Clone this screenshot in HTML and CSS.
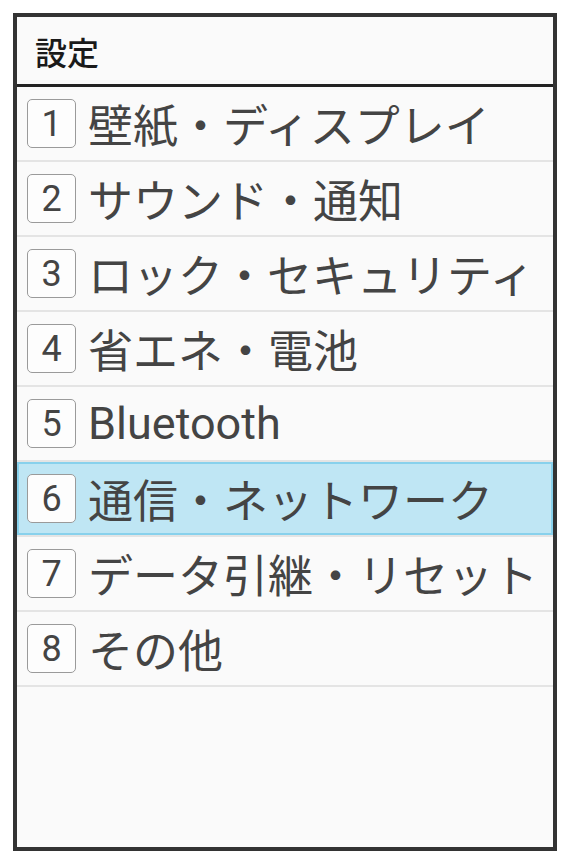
FILE: index.html
```html
<!DOCTYPE html>
<html lang="ja">
<head>
    <meta charset="UTF-8">
    <meta name="viewport" content="width=device-width, initial-scale=1.0">
    <title>設定</title>
    <link rel="stylesheet" href="styles.css">
</head>
<body>
    <div class="screen">
        <div class="title">設定</div>
        <ul class="menu">
            <li class="item"><span class="key">1</span><span class="label">壁紙・ディスプレイ</span></li>
            <li class="item"><span class="key">2</span><span class="label">サウンド・通知</span></li>
            <li class="item"><span class="key">3</span><span class="label">ロック・セキュリティ</span></li>
            <li class="item"><span class="key">4</span><span class="label">省エネ・電池</span></li>
            <li class="item"><span class="key">5</span><span class="label">Bluetooth</span></li>
            <li class="item active"><span class="key">6</span><span class="label">通信・ネットワーク</span></li>
            <li class="item"><span class="key">7</span><span class="label">データ引継・リセット</span></li>
            <li class="item"><span class="key">8</span><span class="label">その他</span></li>
        </ul>
    </div>
</body>
</html>
```

FILE: styles.css
```css
body {
    margin: 0;
    padding: 13px;
    background-color: #fff;
    font-family: Roboto, "Noto Sans CJK JP", sans-serif;
    color: #444;
}
.screen {
    width: 544px;
    height: 838px;
    box-sizing: border-box;
    border: 4px solid #333;
    background: #fafafa;
}
.title {
    height: 67px;
    display: flex;
    align-items: center;
    padding-left: 18px;
    border-bottom: 3px solid #222;
    font-size: 32px;
    font-weight: 500;
    color: #1a1a1a;
}
.menu {
    list-style: none;
    margin: 0;
    padding: 0;
}
.item {
    height: 73px;
    display: flex;
    align-items: center;
    gap: 12px;
    padding-left: 10px;
    border-bottom: 2px solid #e4e4e4;
}
.item.active {
    background: #bfe6f4;
    box-shadow: inset 0 0 0 2px #88d1ec;
}
.key {
    width: 49px;
    height: 49px;
    box-sizing: border-box;
    display: flex;
    align-items: center;
    justify-content: center;
    border: 1.5px solid #9a9a9a;
    border-radius: 5px;
    background: #fdfdfd;
    font-size: 36px;
}
.label {
    font-size: 45px;
    white-space: nowrap;
}
```
